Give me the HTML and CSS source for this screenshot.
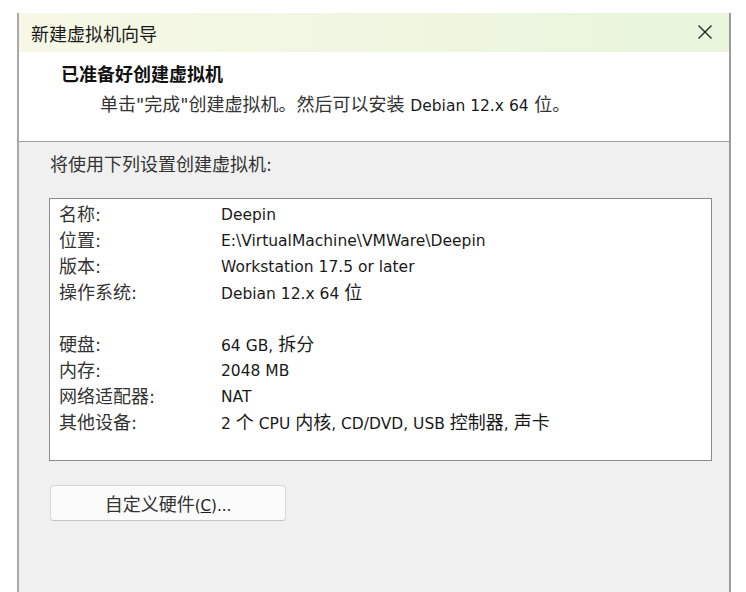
FILE: index.html
```html
<!DOCTYPE html>
<html lang="zh-CN">
<head>
  <meta charset="UTF-8" />
  <meta name="viewport" content="width=device-width, initial-scale=1.0"/>
  <title>新建虚拟机向导</title>
  <link rel="stylesheet" href="styles.css">
</head>
<body>

  <div class="window">
    <div class="titlebar">
      <span class="title">新建虚拟机向导</span>
      <svg class="close" width="16" height="16" viewBox="0 0 16 16">
        <path d="M1.5 1.5 L14.5 14.5 M14.5 1.5 L1.5 14.5" stroke="#1e1e1e" stroke-width="1.3" fill="none"/>
      </svg>
    </div>

    <div class="header">
      <div class="header-title">已准备好创建虚拟机</div>
      <div class="header-sub">单击"完成"创建虚拟机。然后可以安装 <span class="en">Debian 12.x 64</span> 位。</div>
    </div>

    <div class="content">
      <p class="intro">将使用下列设置创建虚拟机:</p>

      <div class="summary">
        <div class="row"><span class="label">名称:</span><span class="value">Deepin</span></div>
        <div class="row"><span class="label">位置:</span><span class="value">E:\VirtualMachine\VMWare\Deepin</span></div>
        <div class="row"><span class="label">版本:</span><span class="value">Workstation 17.5 or later</span></div>
        <div class="row"><span class="label">操作系统:</span><span class="value">Debian 12.x 64 <span class="zh">位</span></span></div>
        <div class="row blank"></div>
        <div class="row"><span class="label">硬盘:</span><span class="value">64 GB, <span class="zh">拆分</span></span></div>
        <div class="row"><span class="label">内存:</span><span class="value">2048 MB</span></div>
        <div class="row"><span class="label">网络适配器:</span><span class="value">NAT</span></div>
        <div class="row"><span class="label">其他设备:</span><span class="value">2 <span class="zh">个</span> CPU <span class="zh">内核</span>, CD/DVD, USB <span class="zh">控制器</span>, <span class="zh">声卡</span></span></div>
      </div>

      <button class="btn" type="button"><span class="zh">自定义硬件</span>(<u>C</u>)...</button>
    </div>
  </div>

</body>
</html>
```

FILE: styles.css
```css
body {
  background-color: #ffffff;
  font-family: "DejaVu Sans", "Noto Sans CJK SC", sans-serif;
  font-size: 15.5px;
  color: #1a1a1a;
  margin: 0;
}
.zh {
  font-size: 18px;
}
.en {
  font-size: 15.5px;
}
.window {
  margin: 13px 0 0 17px;
  width: 714px;
  height: 579px;
  box-sizing: border-box;
  border-left: 2px solid #a9a9a9;
  border-right: 2px solid #9c9c9c;
  background-color: #f0f0f0;
}
.titlebar {
  height: 39px;
  display: flex;
  align-items: center;
  justify-content: space-between;
  padding: 0 16px 0 12px;
  background: linear-gradient(to right, #f6f8e5, #e9f5dd);
}
.title {
  font-size: 18px;
  color: #1a1a1a;
}
.close {
  margin-top: -2px;
}
.header {
  height: 90px;
  box-sizing: border-box;
  background-color: #ffffff;
  border-bottom: 1px solid #a0a0a0;
  padding: 12px 0 0 42px;
}
.header-title {
  font-size: 18px;
  font-weight: 700;
  line-height: 22px;
  color: #111;
}
.header-sub {
  font-size: 18px;
  line-height: 22px;
  margin: 8px 0 0 39px;
  color: #333;
}
.header-sub .en {
  color: #1a1a1a;
}
.content {
  padding: 12px 17px 0 30px;
}
.intro {
  margin: 0 0 22px 1px;
  font-size: 18px;
  line-height: 22px;
  color: #333;
}
.summary {
  height: 263px;
  box-sizing: border-box;
  background-color: #ffffff;
  border: 1px solid #8c8c8c;
  padding: 3px 0 0 9px;
}
.row {
  display: grid;
  grid-template-columns: 162px 1fr;
  height: 26px;
  line-height: 26px;
}
.label {
  font-size: 18px;
  color: #333;
}
.value {
  white-space: nowrap;
}
.btn {
  display: block;
  margin: 24px 0 0 1px;
  width: 236px;
  height: 36px;
  background-color: #fbfbfb;
  border: 1px solid #d6d6d6;
  border-bottom-color: #c4c4c4;
  border-radius: 4px;
  font-family: "DejaVu Sans", "Noto Sans CJK SC", sans-serif;
  font-size: 15px;
  color: #1a1a1a;
  padding: 0;
}
.btn .zh {
  color: #333;
}
```
